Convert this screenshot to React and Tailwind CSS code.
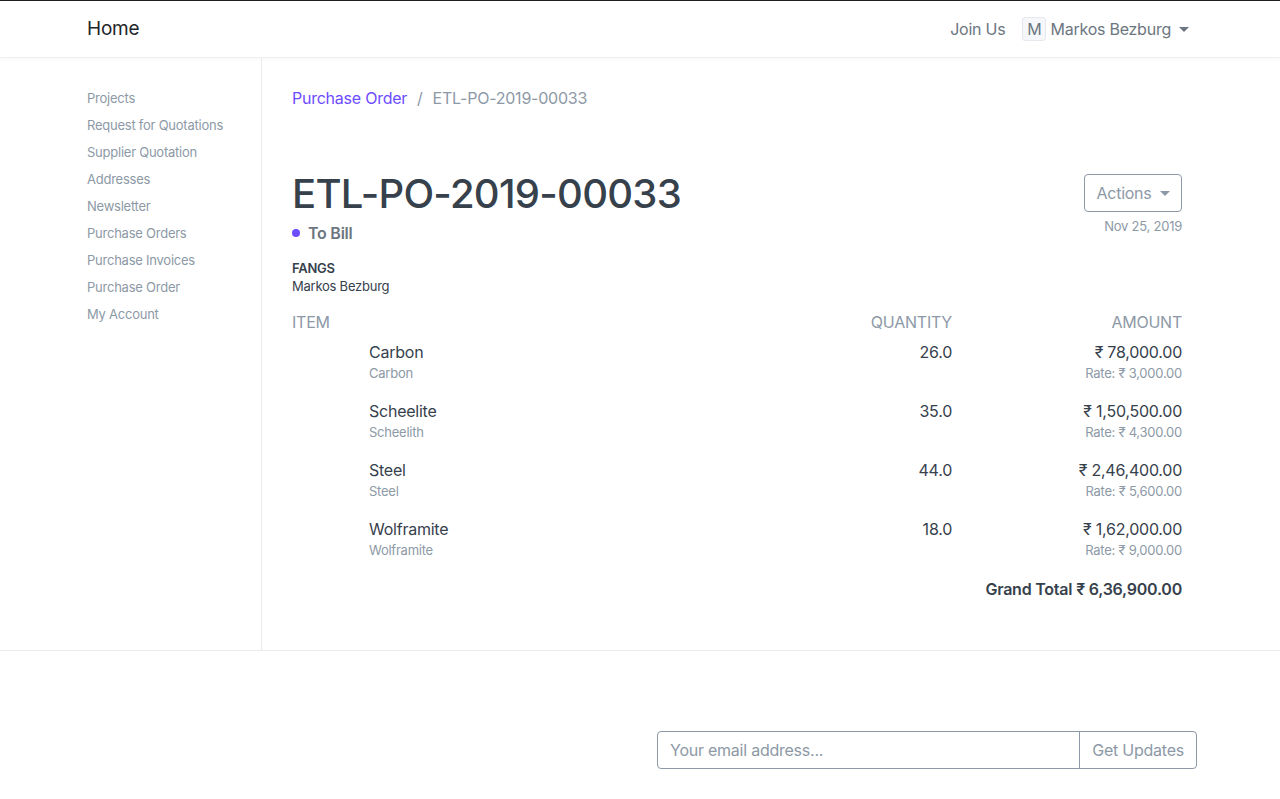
import React from 'react';

const sidebar = [
  'Projects',
  'Request for Quotations',
  'Supplier Quotation',
  'Addresses',
  'Newsletter',
  'Purchase Orders',
  'Purchase Invoices',
  'Purchase Order',
  'My Account',
];

const items = [
  { name: 'Carbon', sub: 'Carbon', qty: '26.0', amount: '₹ 78,000.00', rate: '₹ 3,000.00' },
  { name: 'Scheelite', sub: 'Scheelith', qty: '35.0', amount: '₹ 1,50,500.00', rate: '₹ 4,300.00' },
  { name: 'Steel', sub: 'Steel', qty: '44.0', amount: '₹ 2,46,400.00', rate: '₹ 5,600.00' },
  { name: 'Wolframite', sub: 'Wolframite', qty: '18.0', amount: '₹ 1,62,000.00', rate: '₹ 9,000.00' },
];

function Caret() {
  return <span className="inline-block ml-2 border-x-[5px] border-t-[5px] border-x-transparent border-t-current align-middle" />;
}

export default function App() {
  return (
    <div className="min-h-screen bg-white text-[#36414c] font-['Inter','Liberation_Sans',sans-serif] tracking-[-0.015em] border-t border-[#1f1f1f]">
      {/* Navbar */}
      <nav className="h-[57px] border-b border-[#eef0f2] shadow-[0_1px_3px_rgba(0,0,0,0.04)]">
        <div className="w-[1110px] mx-auto h-full flex items-center justify-between pl-[2px]">
          <span className="text-[19px] text-[#212529]">Home</span>
          <div className="flex items-center text-[16px] text-[#6c7680] pr-[6px]">
            <span className="mr-[17px]">Join Us</span>
            <span className="w-[24px] h-[24px] rounded-[3px] border border-[#e5e9ee] bg-[#f5f7fa] flex items-center justify-center text-[16px] mr-[4px]">M</span>
            <span>Markos Bezburg</span>
            <Caret />
          </div>
        </div>
      </nav>

      {/* Body */}
      <div className="border-b border-[#e8ebee]">
        <div className="w-[1110px] mx-auto flex pl-[2px]">
          <aside className="w-[175px] border-r border-[#e8ebee] pt-[31px] h-[592px]">
            <ul className="text-[13px] text-[#8d99a6]">
              {sidebar.map((s) => (
                <li key={s} className="h-[27px] leading-[18px]">{s}</li>
              ))}
            </ul>
          </aside>

          <main className="flex-1 pl-[30px] pr-[13px] pt-[28px]">
            <div className="flex items-center text-[16px]">
              <span className="text-[#6e4cff]">Purchase Order</span>
              <span className="mx-[10px] text-[#8d99a6]">/</span>
              <span className="text-[#8d99a6]">ETL-PO-2019-00033</span>
            </div>

            <div className="flex justify-between mt-[63px]">
              <div>
                <h1 className="text-[40px] leading-[42px] font-medium tracking-[-0.018em] text-[#36414c]">ETL-PO-2019-00033</h1>
                <div className="flex items-center mt-[6px]">
                  <span className="w-[8px] h-[8px] rounded-full bg-[#6e4cff] mr-[8px]" />
                  <span className="font-semibold text-[16px] text-[#6c7680]">To Bill</span>
                </div>
              </div>
              <div className="flex flex-col items-end pt-[1px]">
                <button className="h-[38px] w-[98px] border border-[#8d99a6] rounded-[4px] text-[16px] text-[#8d99a6] flex items-center justify-center">
                  Actions <Caret />
                </button>
                <span className="text-[13px] text-[#8d99a6] mt-[5px]">Nov 25, 2019</span>
              </div>
            </div>

            <div className="mt-[14px] text-[13px]">
              <div className="font-semibold text-[#36414c] leading-[18px]">FANGS</div>
              <div className="leading-[19px]">Markos Bezburg</div>
            </div>

            <div className="mt-[13px]">
              <div className="flex text-[16px] text-[#8d99a6] uppercase h-[26px] items-center">
                <div className="flex-1">Item</div>
                <div className="w-[200px] text-right">Quantity</div>
                <div className="w-[230px] text-right">Amount</div>
              </div>
              {items.map((it) => (
                <div key={it.name} className="flex h-[59px] pt-[7px]">
                  <div className="w-[77px]" />
                  <div className="flex-1">
                    <div className="text-[16px] leading-[21px]">{it.name}</div>
                    <div className="text-[13px] text-[#8d99a6] leading-[21px]">{it.sub}</div>
                  </div>
                  <div className="w-[200px] text-right text-[16px] leading-[21px]">{it.qty}</div>
                  <div className="w-[230px] text-right">
                    <div className="text-[16px] leading-[21px]">{it.amount}</div>
                    <div className="text-[13px] text-[#8d99a6] leading-[21px]">Rate: {it.rate}</div>
                  </div>
                </div>
              ))}
              <div className="flex justify-end text-[16px] font-semibold mt-[6px]">
                <span>Grand Total</span>
                <span className="ml-[4px]">₹ 6,36,900.00</span>
              </div>
            </div>
          </main>
        </div>
      </div>

      {/* Footer */}
      <footer className="pt-[80px]">
        <div className="w-[1110px] mx-auto flex justify-end">
          <div className="flex w-[540px] h-[38px] -mr-[2px] border border-[#8d99a6] rounded-[4px] text-[16px] text-[#8d99a6]">
            <input
              placeholder="Your email address..."
              className="flex-1 px-[12px] outline-none placeholder:text-[#8d99a6] bg-transparent"
            />
            <button className="px-[12px] border-l border-[#8d99a6]">Get Updates</button>
          </div>
        </div>
      </footer>
    </div>
  );
}
